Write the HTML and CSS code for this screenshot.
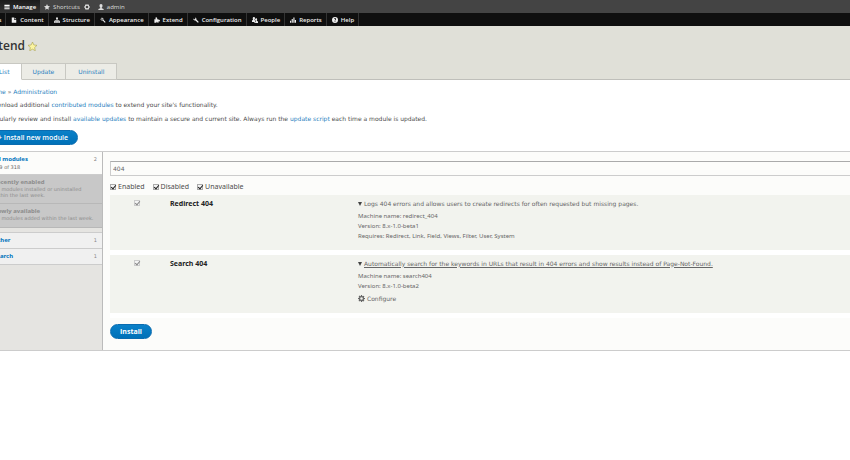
FILE: index.html
```html
<!DOCTYPE html>
<html lang="en">
<head>
<meta charset="utf-8">
<title>Extend</title>
<link rel="stylesheet" href="styles.css">
</head>
<body>
<svg class="sprite" aria-hidden="true">
  <symbol id="i-menu" viewBox="0 0 16 16"><path d="M1 2h14v3H1zM1 6.600h14v3H1zM1 11.200h14v3H1z"/></symbol>
  <symbol id="i-star" viewBox="0 0 16 16"><path d="M8 0l2.400 5.300 5.600.6-4.200 3.900 1.200 5.800L8 12.700l-5 2.900 1.200-5.800L0 5.900l5.600-.6z"/></symbol>
  <symbol id="i-ring" viewBox="0 0 16 16"><path fill-rule="evenodd" d="M8 0l2 2 3-.5.3 3L16 8l-2.700 3.500-.3 3-3-.5-2 2-2-2-3 .5-.3-3L0 8l2.700-3.500.3-3 3 .5zM8 4.500a3.500 3.500 0 100 7 3.500 3.500 0 000-7z"/></symbol>
  <symbol id="i-user" viewBox="0 0 16 16"><path d="M8 0c3 0 4 2 4 4.500C12 7 11 8.500 10 9.500V11l5 2v3H1v-3l5-2V9.500C5 8.500 4 7 4 4.500 4 2 5 0 8 0z"/></symbol>
  <symbol id="i-file" viewBox="0 0 16 16"><path d="M2 1h6v6h6v8H2zM9.500 1L14 5.500H9.500z"/></symbol>
  <symbol id="i-tree" viewBox="0 0 16 16"><path d="M5.500 1h5v5H9v2h5v3h2v4h-5v-4h1.500V9.500H9V11h1.500v4h-5v-4H7V9.500H3.500V11H5v4H0v-4h2V8h5V6H5.500z"/></symbol>
  <symbol id="i-brush" viewBox="0 0 16 16"><path fill-rule="evenodd" d="M5 1l4 3v3l6 6-2 2-6-6H4L1 6zM5 3.500L3 6l1.500 1.500H7V5z"/></symbol>
  <symbol id="i-puzzle" viewBox="0 0 16 16"><path d="M1 6h4C2.500 2.500 4.500 0 7 1c2 .8 2 3 1 5h4v2c2.500-1.500 4 0 4 2s-2 3-4 1.500V15H9c.5-3-3-3-2.500 0H1z"/></symbol>
  <symbol id="i-wrench" viewBox="0 0 16 16"><path d="M5 1c3 0 5 3 4 5.500l6.500 6.500-2.500 2.500L6.500 9C3 10 0 7 1 4l3 2.500L6.500 4z"/></symbol>
  <symbol id="i-people" viewBox="0 0 16 16"><path d="M5 0c3 0 4 4 1.500 7.500L8 9v4H0V9.500l3-2C1 4 2 0 5 0zM11 3c3 0 3.500 4 1.500 7l3.500 2v4H6v-2h3.500V9L8 7c.5-2 1-4 3-4z"/></symbol>
  <symbol id="i-bars" viewBox="0 0 16 16"><path d="M0 10h3v5H0zM4.500 5h3v10h-3zM9 1h3v14H9zM13 8h3v7h-3z"/></symbol>
  <symbol id="i-help" viewBox="0 0 16 16"><path fill-rule="evenodd" d="M8 0a8 8 0 100 16A8 8 0 008 0zM5 4c2-2.500 6-1.500 6 1.500 0 2-2 2.500-2 4H7c0-2.500 2-2.500 2-4 0-1-1.500-1-2.500 0zM7 11h2v2H7z"/></symbol>
  <symbol id="i-gear" viewBox="0 0 16 16"><path fill-rule="evenodd" d="M6.800 0h2.400l.4 2.400 1.400.6 2-1.400 1.700 1.700-1.400 2 .6 1.400 2.100.3v2.400l-2.200.4-.6 1.400 1.400 2-1.700 1.700-2-1.400-1.400.6L9.200 16H6.800l-.4-2.200-1.400-.6-2 1.400-1.700-1.700 1.400-2-.6-1.400L0 9.200V6.800l2.300-.4.6-1.400-1.400-2 1.700-1.600 2 1.300 1.300-.5zM8 5a3 3 0 100 6 3 3 0 000-6z"/></symbol>
</svg>
<div class="page">
  <nav class="bar" aria-label="Toolbar">
    <a class="tab tab-active" href="#"><svg class="icon"><use href="#i-menu"/></svg>Manage</a>
    <a class="tab" href="#"><svg class="icon"><use href="#i-star"/></svg>Shortcuts</a>
    <a class="tab tab-icon" href="#" aria-label="Edit shortcuts"><svg class="icon"><use href="#i-ring"/></svg></a>
    <a class="tab" href="#"><svg class="icon"><use href="#i-user"/></svg>admin</a>
  </nav>
  <nav class="tray" aria-label="Administration menu">
    <a class="item item-first" href="#">Tools</a>
    <a class="item" href="#"><svg class="icon"><use href="#i-file"/></svg>Content</a>
    <a class="item" href="#"><svg class="icon"><use href="#i-tree"/></svg>Structure</a>
    <a class="item" href="#"><svg class="icon"><use href="#i-brush"/></svg>Appearance</a>
    <a class="item" href="#"><svg class="icon"><use href="#i-puzzle"/></svg>Extend</a>
    <a class="item" href="#"><svg class="icon"><use href="#i-wrench"/></svg>Configuration</a>
    <a class="item" href="#"><svg class="icon"><use href="#i-people"/></svg>People</a>
    <a class="item" href="#"><svg class="icon"><use href="#i-bars"/></svg>Reports</a>
    <a class="item" href="#"><svg class="icon"><use href="#i-help"/></svg>Help</a>
  </nav>
  <header class="header">
    <div class="title-row">
      <h1 class="title">Extend</h1>
      <svg class="fav"><use href="#i-star"/></svg>
    </div>
    <nav class="tabs" aria-label="Primary tabs">
      <a class="ptab ptab-active" href="#">List</a>
      <a class="ptab" href="#">Update</a>
      <a class="ptab ptab-wide" href="#">Uninstall</a>
    </nav>
  </header>
  <section class="intro">
    <p class="crumbs"><a href="#">Home</a> » <a href="#">Administration</a></p>
    <p>Download additional <a href="#">contributed modules</a> to extend your site's functionality.</p>
    <p>Regularly review and install <a href="#">available updates</a> to maintain a secure and current site. Always run the <a href="#">update script</a> each time a module is updated.</p>
    <button class="btn btn-add" type="button">+ Install new module</button>
  </section>
  <form class="panel">
    <aside class="side">
      <a class="group group-active" href="#"><span class="group-head"><strong>All modules</strong><span class="count">2</span></span><span class="sub">309 of 318</span></a>
      <div class="group group-off group-recent"><strong>Recently enabled</strong><span class="note">No modules installed or uninstalled<br>within the last week.</span></div>
      <div class="group group-off"><strong>Newly available</strong><span class="note">No modules added within the last week.</span></div>
      <div class="gap"></div>
      <a class="group group-link" href="#"><strong>Other</strong><span class="count">1</span></a>
      <a class="group group-link" href="#"><strong>Search</strong><span class="count">1</span></a>
    </aside>
    <div class="main">
      <input class="filter" type="text" value="404" aria-label="Filter modules">
      <div class="checks">
        <label><input class="box" type="checkbox" checked>Enabled</label>
        <label><input class="box" type="checkbox" checked>Disabled</label>
        <label><input class="box" type="checkbox" checked>Unavailable</label>
      </div>
      <table class="modules">
        <tr class="module">
          <td class="c-check"><input class="box" type="checkbox" checked disabled aria-label="Redirect 404"></td>
          <th class="c-name" scope="row">Redirect 404</th>
          <td class="c-info">
            <div class="desc"><span class="caret"></span><span>Logs 404 errors and allows users to create redirects for often requested but missing pages.</span></div>
            <div class="meta">Machine name: redirect_404</div>
            <div class="meta">Version: 8.x-1.0-beta1</div>
            <div class="meta">Requires: Redirect, Link, Field, Views, Filter, User, System</div>
          </td>
        </tr>
        <tr class="module module-tall">
          <td class="c-check"><input class="box" type="checkbox" checked disabled aria-label="Search 404"></td>
          <th class="c-name" scope="row">Search 404</th>
          <td class="c-info">
            <div class="desc"><span class="caret"></span><span class="under">Automatically search for the keywords in URLs that result in 404 errors and show results instead of Page-Not-Found.</span></div>
            <div class="meta">Machine name: search404</div>
            <div class="meta">Version: 8.x-1.0-beta2</div>
            <a class="configure" href="#"><svg class="icon icon-gear"><use href="#i-gear"/></svg>Configure</a>
          </td>
        </tr>
      </table>
      <button class="btn" type="submit">Install</button>
    </div>
  </form>
</div>
</body>
</html>
```
FILE: styles.css
```css
* { box-sizing: border-box; }
body {
  margin: 0;
  overflow: hidden;
  background: #fff;
  color: #4c4c4c;
  font: 6px/14px "DejaVu Sans", sans-serif;
}
a { color: #2a7fc0; text-decoration: none; }
p { margin: 0; }
.sprite { display: none; }
.page { margin-left: -16px; }
.icon { width: 6px; height: 6px; fill: currentColor; flex: none; }
.icon-gear { width: 7px; height: 7px; }

.bar, .tray { display: flex; height: 13px; font-family: "Open Sans", sans-serif; }
.bar { padding-left: 16px; background: #444; }
.tab {
  display: flex;
  align-items: center;
  gap: 3px;
  padding: 0 4px;
  color: #ddd;
}
.tab-active { background: linear-gradient(#1b1b1b, #333); color: #fff; font-weight: 600; }
.tab-icon { padding: 0 4px 0 0; }

.tray { background: #0f0f0f; }
.item {
  display: flex;
  align-items: center;
  gap: 3px;
  padding: 0 4px 0 5px;
  border-right: 1px solid #333;
  color: #eee;
  font-weight: 600;
}
.item-first { padding-left: 2px; }

.header {
  display: flex;
  flex-direction: column;
  justify-content: space-between;
  height: 54px;
  padding: 12px 0 0 1px;
  background: #e0e0d8;
  border-bottom: 1px solid #bfbfba;
}
.title-row { display: flex; align-items: center; gap: 3px; }
.title { margin: 0; color: #333; font: 600 12px/16px "Open Sans", sans-serif; }
.fav { width: 9px; height: 9px; fill: #fbf4a0; stroke: #a39b4a; stroke-width: 1px; overflow: visible; }
.tabs { display: flex; margin-bottom: -1px; }
.ptab {
  height: 17px;
  padding: 0 11px;
  border: 1px solid #c8c8c2;
  border-left: 0;
  background: #ecece6;
  line-height: 15px;
}
.ptab-active { padding-left: 14px; border-bottom-color: #fff; background: #fff; }
.ptab-wide { padding: 0 12px; }

.intro { padding: 6px 4px; }
.crumbs { line-height: 12px; }

.btn {
  height: 15px;
  padding: 0 9px;
  border: 1px solid #0a6cb0;
  border-radius: 8px;
  background: linear-gradient(#0a80c8, #0071b8);
  color: #fff;
  font: 700 7px/13px "Open Sans", sans-serif;
}
.btn-add { display: block; margin-top: 4px; font-weight: 600; }

.panel {
  display: flex;
  border-top: 1px solid #ccc;
  border-bottom: 1px solid #ccc;
  background: #fcfcfa;
}
.side {
  width: 119px;
  flex: none;
  border-right: 1px solid #bbb;
  background: #e5e4e1;
  line-height: 8px;
}
.group { display: block; padding: 3px 5px 3px 9px; border-bottom: 1px solid #ccc; }
.group strong { display: block; font-family: "Noto Sans", sans-serif; }
.group-active { height: 23px; background: #fcfcfa; }
.group-head, .group-link { display: flex; justify-content: space-between; }
.group-head strong, .group-link strong { color: #0074bd; }
.count { color: #888; font-size: 5px; font-weight: 400; }
.sub { display: block; color: #666; font-size: 5px; }
.group-off { height: 24px; background: #c8c8c8; border-color: #b8b8b8; color: #8c8c8c; }
.group-recent { height: 29px; }
.note { display: block; font-size: 5px; line-height: 6px; }
.gap { height: 5px; border-bottom: 1px solid #ccc; }
.group-link { height: 16px; background: #f0f0f0; }

.main { flex: 1; min-width: 0; padding: 9px 0 11px 7px; }
.filter {
  display: block;
  width: 100%;
  height: 15px;
  padding: 0 2px;
  border: 1px solid #ccc;
  border-top-color: #aaa;
  border-right: 0;
  background: #fcfcfa;
  color: #666;
  font: 6px/13px "DejaVu Sans", sans-serif;
}
.checks { display: flex; gap: 8px; height: 19px; padding-top: 4px; font: 7px/14px "Noto Sans", sans-serif; }
.checks label { display: flex; align-items: center; gap: 2px; height: 14px; }
.box {
  appearance: none;
  display: block;
  position: relative;
  width: 6px;
  height: 6px;
  margin: 0;
  border: 1px solid #aaa;
  background: #f4f4f4;
}
.box::after {
  content: "";
  position: absolute;
  left: 1px;
  top: -1px;
  width: 2px;
  height: 4px;
  border: solid #222;
  border-width: 0 1px 1px 0;
  transform: rotate(40deg);
}
.box:disabled { border-color: #ccc; }
.box:disabled::after { border-color: #888; }

.modules { width: 100%; border-collapse: collapse; margin-bottom: 6px; }
.module { height: 57px; background: #f2f3ee; border-bottom: 5px solid #fff; }
.module-tall { height: 63px; }
.modules td, .modules th { padding: 3px 0 0; vertical-align: top; text-align: left; }
.modules .c-check { width: 60px; padding: 5px 0 0 24px; }
.modules .c-name { width: 188px; color: #222; font: 700 7px/12px "Noto Sans", sans-serif; }
.desc { display: flex; align-items: center; gap: 2px; padding-bottom: 1px; line-height: 12px; color: #666; }
.caret { border: solid transparent; border-width: 4px 2px 0; border-top-color: #444; }
.under { text-decoration: underline; }
.meta { color: #666; font-family: "Noto Sans", sans-serif; line-height: 10px; }
.configure { display: flex; align-items: center; gap: 2px; margin-top: 1px; color: #666; }
```
